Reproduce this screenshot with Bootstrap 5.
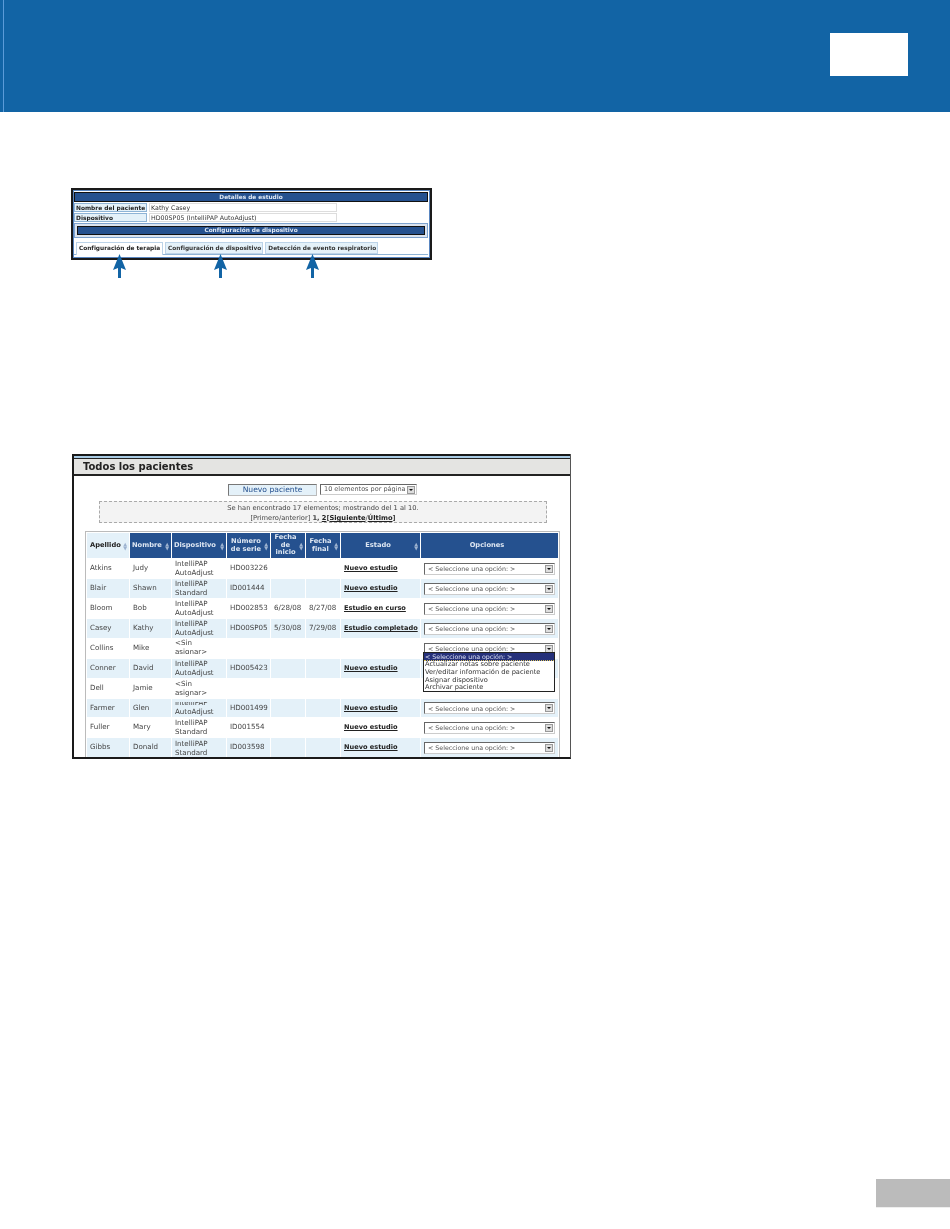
<!DOCTYPE html>
<html lang="es">
<head>
    <meta charset="UTF-8">
    <meta name="viewport" content="width=device-width, initial-scale=1.0">
    <title>Todos los pacientes</title>
    <link href="https://cdn.jsdelivr.net/npm/bootstrap@5.3.0/dist/css/bootstrap.min.css" rel="stylesheet">
    <style>
        body { background: #fff; font-family: "DejaVu Sans", sans-serif; font-size: 7px; color: #333; }
        .page-head { height: 112px; background: #1264a5; padding: 0 42px 0 3px; }
        .head-inner { height: 112px; padding-top: 33px; border-left: 1px solid #5b9bd8; }
        .head-box { width: 78px; height: 43px; background: #fff; }
        .foot-row { margin-top: 420px; }
        .page-foot { width: 74px; height: 29px; background: #bbb; border-bottom: 1px solid #eee; }

        /* primera captura */
        .study-wrap { position: relative; width: 361px; margin: 76px 0 0 71px; height: 92px; }
        .study-shot { width: 361px; height: 72px; border: 2px solid #1a1a1a; will-change: transform; }
        .study-in { height: 100%; border: 1px solid #5a86c0; padding: 1px 1px 0 0; }
        .bar-small { height: 10px; background: #25518f; border: 1px solid #111; color: #dfe8f4; font-weight: 700; font-size: 5.8px; line-height: 8px; text-align: center; }
        .study-row { height: 10px; margin-top: 0; gap: 2px; line-height: 8px; padding-top: 1px; }
        .study-label { width: 73px; background: #e4f1f9; border: 1px solid #8fb4d6; font-weight: 700; color: #222; font-size: 5.9px; padding-left: 1px; white-space: nowrap; overflow: hidden; }
        .study-value { width: 188px; border: 1px solid #ddd; font-size: 6.3px; padding-left: 1px; white-space: nowrap; }
        .bar-outer { height: 15px; margin-top: 1px; border: 1px solid #7ea3cf; padding: 2px; background: #dbe3ee; }
        .bar-big { height: 100%; background: #25518f; border: 1px solid #111; color: #dfe8f4; font-weight: 700; font-size: 5.8px; line-height: 7px; text-align: center; }
        .study-tabs { margin-top: 4px; height: 13px; gap: 2px; padding-left: 2px; border-bottom: 1px solid #8fb4d6; }
        .study-tab { height: 12px; background: #e4f1f9; border: 1px solid #bcd3e8; font-weight: 700; font-size: 5.8px; line-height: 10px; padding: 0 1px 0 2px; white-space: nowrap; color: #333; }
        .study-tab-on { background: #fff; border-bottom: 0; height: 13px; color: #222; padding-right: 2px; }
        .up-arrow { position: absolute; top: 66px; width: 13px; height: 24px; }

        /* segunda captura */
        .patients-shot { width: 499px; height: 305px; margin: 174px 0 0 72px; border: 2px solid #1a1a1a; border-top: 0; border-right: 1px solid #555; overflow: hidden; will-change: transform; }
        .patients-top { height: 4px; background: #a9cbe4; border-top: 2px solid #1a1a1a; margin-left: -2px; }
        .patients-title { height: 18px; background: #e4e4e2; border-top: 1px solid #222; border-bottom: 2px solid #222; font-weight: 700; font-size: 10px; line-height: 15px; padding-left: 9px; color: #222; }
        .new-row { margin-top: 8px; height: 12px; gap: 3px; padding-left: 154px; }
        .new-btn { width: 89px; height: 12px; background: #e4f1f9; border: 1px solid #777; border-right-color: #bbb; border-bottom-color: #bbb; color: #25518f; font-size: 7.6px; line-height: 10px; text-align: center; }
        .per-page { width: 97px; height: 11px; font-size: 6.5px; }
        .fake-select { display: flex; justify-content: space-between; align-items: center; height: 11px; border: 1px solid #666; border-right-color: #ccc; border-bottom-color: #ccc; background: #fff; padding-left: 3px; color: #555; white-space: nowrap; line-height: 9px; }
        .drop-btn { width: 8px; height: 8px; margin-right: 1px; background: #ddd; border: 1px solid #999; position: relative; flex: none; }
        .drop-btn::after { content: ""; position: absolute; left: 1px; top: 2px; border: 2px solid transparent; border-top: 2px solid #111; }
        .found-box { width: 448px; height: 22px; margin: 5px 0 0 25px; background: #f3f3f3; border: 1px dashed #aaa; text-align: center; font-size: 6.7px; line-height: 10px; padding-top: 1px; color: #444; }
        .found-box a, .state-link { color: #222; font-weight: 700; text-decoration: underline; }
        .table-wrap { position: relative; width: 475px; margin: 8px 0 0 11px; border: 1px solid #bbb; border-bottom: 0; }
        .table-wrap table { table-layout: fixed; width: 473px; border-collapse: separate; border-spacing: 1px; }
        .table-wrap th { height: 25px; background: #25518f; color: #dde6f2; font-size: 6.7px; font-weight: 700; line-height: 7.5px; padding: 0 7px 0 2px; vertical-align: middle; position: relative; }
        .table-wrap th.sorted { background: #e4f1f9; color: #222; padding-left: 3px; }
        .sort-mark { position: absolute; right: 2px; top: 50%; margin-top: -4px; font-size: 5px; line-height: 4px; color: #9db3d0; }
        .table-wrap td { height: 19px; padding: 0 2px 0 3px; font-size: 7.1px; color: #444; vertical-align: middle; }
        .table-wrap tr.short-row td { height: 18px; }
        .table-wrap tr.tint td { background: #e4f1f9; }
        .cell-clip { max-height: 19px; line-height: 8.8px; overflow: hidden; }
        .cell-clip-low { height: 15px; line-height: 8.8px; overflow: hidden; }
        .cell-clip-top { height: 15px; margin-bottom: 4px; line-height: 8.8px; overflow: hidden; }
        .cell-clip-up { height: 15px; margin-top: 3px; overflow: hidden; line-height: 8.8px; display: flex; flex-direction: column; justify-content: flex-end; }
        .state-link { font-size: 6.6px; white-space: nowrap; }
        .opt-select { width: 131px; height: 12px; font-size: 6.3px; }
        .opt-menu { position: absolute; left: 337px; top: 120px; width: 132px; height: 40px; background: #fff; border: 1px solid #222; font-size: 6.65px; line-height: 7.8px; color: #333; white-space: nowrap; padding-left: 1px; }
        .opt-on { background: #25307a; color: #dfe3f5; border-bottom: 1px dotted #d9c35a; margin-left: -1px; padding-left: 1px; font-size: 6.3px; height: 8px; line-height: 7px; }
    </style>
</head>
<body>
    <div class="page-head">
        <div class="head-inner d-flex justify-content-end">
            <div class="head-box"></div>
        </div>
    </div>

    <!-- Detalles de estudio -->
    <div class="study-wrap">
        <div class="study-shot">
            <div class="study-in">
                <div class="bar-small">Detalles de estudio</div>
                <div class="study-row d-flex"><div class="study-label">Nombre del paciente</div><div class="study-value">Kathy Casey</div></div>
                <div class="study-row d-flex"><div class="study-label">Dispositivo</div><div class="study-value">HD00SP05 (IntelliPAP AutoAdjust)</div></div>
                <div class="bar-outer"><div class="bar-big">Configuración de dispositivo</div></div>
                <div class="study-tabs d-flex">
                    <div class="study-tab study-tab-on">Configuración de terapia</div>
                    <div class="study-tab">Configuración de dispositivo</div>
                    <div class="study-tab">Detección de evento respiratorio</div>
                </div>
            </div>
        </div>
        <svg class="up-arrow" style="left:42px" viewBox="0 0 13 24"><path d="M6.5 0 13 16 8 14V24H5V14L0 16Z" fill="#1264a5"/></svg>
        <svg class="up-arrow" style="left:143px" viewBox="0 0 13 24"><path d="M6.5 0 13 16 8 14V24H5V14L0 16Z" fill="#1264a5"/></svg>
        <svg class="up-arrow" style="left:235px" viewBox="0 0 13 24"><path d="M6.5 0 13 16 8 14V24H5V14L0 16Z" fill="#1264a5"/></svg>
    </div>

    <!-- Todos los pacientes -->
    <div class="patients-shot">
        <div class="patients-top"></div>
        <div class="patients-title">Todos los pacientes</div>
        <div class="new-row d-flex">
            <div class="new-btn">Nuevo paciente</div>
            <div class="fake-select per-page">10 elementos por página<span class="drop-btn"></span></div>
        </div>
        <div class="found-box">Se han encontrado 17 elementos; mostrando del 1 al 10.<br>[Primero/anterior] <b>1,</b> <a href="#">2</a><b>[</b><a href="#">Siguiente</a>/<a href="#">Último</a><b>]</b></div>
        <div class="table-wrap">
            <table>
                <colgroup>
                    <col style="width:42px"><col style="width:41px"><col style="width:54px"><col style="width:43px"><col style="width:34px"><col style="width:34px"><col style="width:79px"><col>
                </colgroup>
                <thead>
                    <tr>
                        <th class="sorted">Apellido<span class="sort-mark">▲<br>▼</span></th>
                        <th>Nombre<span class="sort-mark">▲<br>▼</span></th>
                        <th>Dispositivo<span class="sort-mark">▲<br>▼</span></th>
                        <th class="text-center">Número de serie<span class="sort-mark">▲<br>▼</span></th>
                        <th class="text-center">Fecha de inicio<span class="sort-mark">▲<br>▼</span></th>
                        <th class="text-center">Fecha final<span class="sort-mark">▲<br>▼</span></th>
                        <th class="text-center">Estado<span class="sort-mark">▲<br>▼</span></th>
                        <th class="text-center">Opciones</th>
                    </tr>
                </thead>
                <tbody id="patientRows"></tbody>
            </table>
            <div class="opt-menu">
                <div class="opt-on">&lt; Seleccione una opción: &gt;</div>
                <div>Actualizar notas sobre paciente</div>
                <div>Ver/editar información de paciente</div>
                <div>Asignar dispositivo</div>
                <div>Archivar paciente</div>
            </div>
        </div>
    </div>

    <div class="foot-row d-flex justify-content-end">
        <div class="page-foot"></div>
    </div>

    <script src="https://cdn.jsdelivr.net/npm/bootstrap@5.3.0/dist/js/bootstrap.bundle.min.js"></script>
    <script>
        // Filas de la tabla de pacientes
        const auto = 'IntelliPAP AutoAdjust';
        const std = 'IntelliPAP Standard';
        const none = '&lt;Sin asignar&gt;';
        const patients = [
            ['Atkins', 'Judy', auto, 'HD003226', '', '', 'Nuevo estudio'],
            ['Blair', 'Shawn', std, 'ID001444', '', '', 'Nuevo estudio'],
            ['Bloom', 'Bob', auto, 'HD002853', '6/28/08', '8/27/08', 'Estudio en curso'],
            ['Casey', 'Kathy', auto, 'HD00SP05', '5/30/08', '7/29/08', 'Estudio completado'],
            ['Collins', 'Mike', none, '', '', '', '', 'top'],
            ['Conner', 'David', auto, 'HD005423', '', '', 'Nuevo estudio'],
            ['Dell', 'Jamie', none, '', '', '', ''],
            ['Farmer', 'Glen', auto, 'HD001499', '', '', 'Nuevo estudio', 'up'],
            ['Fuller', 'Mary', std, 'ID001554', '', '', 'Nuevo estudio'],
            ['Gibbs', 'Donald', std, 'ID003598', '', '', 'Nuevo estudio', 'low']
        ];

        const rows = document.getElementById('patientRows');
        patients.forEach((p, i) => {
            const tr = document.createElement('tr');
            tr.className = (i % 2 === 1 ? 'tint ' : '') + (p[7] === 'up' ? 'short-row' : '');
            const clip = p[7] ? `cell-clip-${p[7]}` : 'cell-clip';
            const state = p[6] ? `<a class="state-link" href="#">${p[6]}</a>` : '';
            // Dell no tiene desplegable; el de Collins queda abierto
            const select = p[0] === 'Dell' || p[0] === 'Conner' ? '' :
                `<div class="fake-select opt-select">&lt; Seleccione una opción: &gt;<span class="drop-btn"></span></div>`;
            tr.innerHTML = `
                <td>${p[0]}</td><td>${p[1]}</td>
                <td><div class="${clip}">${p[2]}</div></td>
                <td>${p[3]}</td><td>${p[4]}</td><td>${p[5]}</td>
                <td>${state}</td><td>${select}</td>`;
            rows.appendChild(tr);
        });
    </script>
</body>
</html>
